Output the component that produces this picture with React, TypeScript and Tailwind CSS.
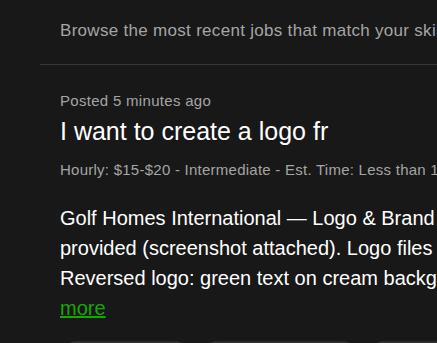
export default function App() {
  const skills = [
    { name: 'Logo Design', w: 'w-[131px]' },
    { name: 'Brand Identity', w: 'w-[157px]' },
    { name: 'Graphic Design', w: 'w-[150px]' },
  ];
  return (
    <div
      className="w-[437px] h-[343px] overflow-hidden bg-[#181818] text-white"
      style={{ fontFamily: '"Liberation Sans", Arial, sans-serif' }}
    >
      <div className="pl-[40px]">
        <p className="pl-5 pt-[21px] pb-[23px] text-[17px] leading-5 tracking-[0.3px] text-[#a5a5a5] whitespace-nowrap">
          Browse the most recent jobs that match your skills and profile description
        </p>
        <div className="border-t border-[#363636]" />
        <div className="pl-5 pt-[28px] whitespace-nowrap">
          <p className="text-[15px] leading-4 tracking-[0.3px] text-[#a5a5a5]">Posted 5 minutes ago</p>
          <h2 className="mt-[7px] text-[25px] leading-[30px] text-white">I want to create a logo fr</h2>
          <p className="mt-[16px] text-[15px] leading-4 tracking-[0.25px] text-[#a5a5a5]">
            Hourly: $15-$20 - Intermediate - Est. Time: Less than 1 month, Less than 30 hrs/week
          </p>
          <div className="mt-[25px] text-[20px] leading-[30px] text-white">
            <p>Golf Homes International — Logo &amp; Brand Identity refresh</p>
            <p>provided (screenshot attached). Logo files in all formats</p>
            <p>Reversed logo: green text on cream background version</p>
            <a href="#" className="text-[#14a800] underline">more</a>
          </div>
          <div className="mt-[18px] flex gap-[10px]">
            {skills.map((s) => (
              <span
                key={s.name}
                className={`${s.w} h-8 shrink-0 rounded-full bg-[#2e2e2e] text-center text-[14px] leading-8 text-[#d0d0d0]`}
              >
                {s.name}
              </span>
            ))}
          </div>
        </div>
      </div>
    </div>
  );
}
